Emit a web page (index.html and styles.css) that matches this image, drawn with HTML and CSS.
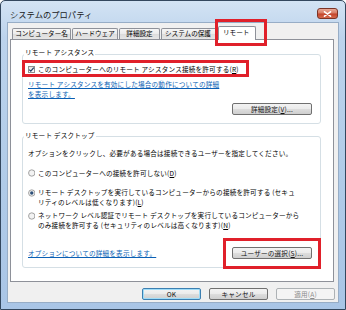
FILE: index.html
```html
<!DOCTYPE html>
<html lang="ja">
<head>
<meta charset="utf-8">
<title>システムのプロパティ</title>
<link rel="stylesheet" href="styles.css">
</head>
<body>
<div class="window">
  <div class="titlebar">
    <span class="title">システムのプロパティ</span>
    <span class="close"><svg width="9" height="6" viewBox="0 0 9 6"><path d="M1.5 0.8 L7.5 5.2 M7.5 0.8 L1.5 5.2" stroke="#fff" stroke-width="1.6" stroke-linecap="round"/></svg></span>
  </div>
  <div class="client">
    <div class="tabs">
      <div class="tab tab-name">コンピューター名</div>
      <div class="tab tab-hw">ハードウェア</div>
      <div class="tab tab-adv">詳細設定</div>
      <div class="tab tab-prot">システムの保護</div>
      <div class="tab tab-remote active marked-tab">リモート</div>
    </div>
    <div class="panel">
      <div class="group group-assist">
        <span class="group-title">リモート アシスタンス</span>
        <div class="option marked-check">
          <span class="checkbox"><svg width="7" height="7" viewBox="0 0 7 7"><path d="M1.3 3.6 L2.8 5.1 L5.8 1.6" fill="none" stroke="#1d3f66" stroke-width="1.2"/></svg></span>
          <span class="label">このコンピューターへのリモート アシスタンス接続を許可する(<u>R</u>)</span>
        </div>
        <a class="link link-assist" href="#">リモート アシスタンスを有効にした場合の動作についての詳細<br>を表示します。</a>
        <div class="button-row">
          <button class="btn btn-wide">詳細設定(<u>V</u>)...</button>
        </div>
      </div>
      <div class="group group-desktop">
        <span class="group-title">リモート デスクトップ</span>
        <p class="intro">オプションをクリックし、必要がある場合は接続できるユーザーを指定してください。</p>
        <div class="option radio-opt opt-none">
          <span class="radio"><svg width="8" height="8" viewBox="0 0 8 8"><circle cx="4" cy="4" r="3.4" fill="#f3f3f3" stroke="#939393" stroke-width="0.9"/></svg></span>
          <span class="label">このコンピューターへの接続を許可しない(<u>D</u>)</span>
        </div>
        <div class="option radio-opt opt-any">
          <span class="radio"><svg width="8" height="8" viewBox="0 0 8 8"><circle cx="4" cy="4" r="3.4" fill="#f3f3f3" stroke="#939393" stroke-width="0.9"/><circle cx="4" cy="4" r="1.8" fill="#2c4f78"/></svg></span>
          <span class="label">リモート デスクトップを実行しているコンピューターからの接続を許可する (セキュ<br>リティのレベルは低くなります)(<u>L</u>)</span>
        </div>
        <div class="option radio-opt opt-nla">
          <span class="radio"><svg width="8" height="8" viewBox="0 0 8 8"><circle cx="4" cy="4" r="3.4" fill="#f3f3f3" stroke="#939393" stroke-width="0.9"/></svg></span>
          <span class="label">ネットワーク レベル認証でリモート デスクトップを実行しているコンピューターから<br>のみ接続を許可する (セキュリティのレベルは高くなります)(<u>N</u>)</span>
        </div>
        <div class="bottom-row">
          <a class="link" href="#">オプションについての詳細を表示します。</a>
          <button class="btn btn-wide marked-btn">ユーザーの選択(<u>S</u>)...</button>
        </div>
      </div>
    </div>
    <div class="footer">
      <button class="btn btn-dlg btn-default">OK</button>
      <button class="btn btn-dlg">キャンセル</button>
      <button class="btn btn-dlg btn-disabled">適用(<u>A</u>)</button>
    </div>
  </div>
</div>
</body>
</html>
```
FILE: styles.css
```css
html, body {
  margin: 0;
  padding: 0;
  background: #ffffff;
}

body {
  font-family: "Noto Sans CJK JP", "Noto Sans", sans-serif;
  font-size: 6.6px;
  line-height: 8px;
  letter-spacing: 0.2px;
  color: #000000;
}

.window {
  width: 346px;
  height: 310px;
  box-sizing: border-box;
  border: 1px solid #33475e;
  border-radius: 5px 5px 0 0;
  background: linear-gradient(180deg, #d3e3f4 0%, #bcd3ec 12%, #b0cbe8 60%, #a9c5e6 100%);
  padding: 0 6px 6px;
  display: flex;
  flex-direction: column;
}

.titlebar {
  height: 21px;
  display: flex;
  justify-content: space-between;
  align-items: flex-start;
  flex-shrink: 0;
}

.title {
  margin: 8px 0 0 3px;
  font-size: 8.3px;
  line-height: 10px;
  letter-spacing: 0;
  color: #1a1a1a;
}

.close {
  margin: 7px 1px 0 0;
  width: 21px;
  height: 11px;
  box-sizing: border-box;
  border: 1px solid #7b3426;
  border-radius: 3px;
  background: linear-gradient(180deg, #e9a997 0%, #d77b63 45%, #c4442a 55%, #d5694c 100%);
  display: flex;
  align-items: center;
  justify-content: center;
}

.close svg {
  display: block;
}

.client {
  flex: 1;
  background: #f0f0f0;
  border: 1px solid #97adc6;
  display: flex;
  flex-direction: column;
}

.tabs {
  margin: 3px 0 0 4px;
  height: 13px;
  display: flex;
  align-items: flex-end;
  flex-shrink: 0;
}

.tab {
  height: 11px;
  box-sizing: border-box;
  border: 1px solid #8e9199;
  border-bottom: none;
  border-radius: 2px 2px 0 0;
  background: linear-gradient(180deg, #f6f6f6 0%, #ebebeb 50%, #dcdcdc 51%, #e6e6e6 100%);
  margin-right: 1px;
  text-align: center;
  line-height: 9px;
  letter-spacing: 0;
  white-space: nowrap;
  overflow: hidden;
}

.tab-name { width: 59px; }
.tab-hw { width: 46px; }
.tab-adv { width: 41px; }
.tab-prot { width: 59px; text-align: left; padding-left: 3px; }

.tab.active {
  height: 14px;
  width: 38px;
  margin: 0 0 -1px -3px;
  background: #ffffff;
  position: relative;
  z-index: 2;
  line-height: 11px;
  text-align: left;
  padding-left: 4px;
}

.marked-tab {
  overflow: visible;
}

.marked-tab::after {
  content: "";
  position: absolute;
  top: -8px;
  left: -4px;
  right: -12px;
  bottom: -6px;
  border: 3px solid #e0202a;
}

.panel {
  margin-left: 2px;
  width: 324px;
  height: 243px;
  box-sizing: border-box;
  border: 1px solid #8e9199;
  background: #ffffff;
  display: flex;
  flex-direction: column;
  flex-shrink: 0;
}

.group {
  position: relative;
  box-sizing: border-box;
  width: 299px;
  margin-left: 11px;
  border: 1px solid #d5dfe5;
  border-radius: 3px;
  padding: 0 8px 0 5px;
}

.group-assist {
  margin-top: 14px;
  height: 70px;
}

.group-desktop {
  margin-top: 12px;
  height: 132px;
}

.group-title {
  position: absolute;
  left: 1px;
  top: -7px;
  padding: 0 1px;
  background: #ffffff;
  white-space: nowrap;
}

.group-desktop .group-title {
  top: -6px;
}

.option {
  display: flex;
  align-items: flex-start;
  gap: 3px;
  white-space: nowrap;
}

.checkbox {
  width: 7px;
  height: 7px;
  box-sizing: border-box;
  border: 1px solid #8f8f8f;
  background: linear-gradient(180deg, #e4e4e4, #fbfbfb);
  margin-top: 1px;
  display: flex;
  align-items: center;
  justify-content: center;
}

.checkbox svg {
  display: block;
  margin: -1px;
}

.radio {
  width: 7px;
  height: 8px;
  display: flex;
  align-items: center;
}

.radio svg {
  display: block;
  margin-left: -0.5px;
}

.multi {
  line-height: 9.6px;
}

.marked-check {
  position: relative;
  width: fit-content;
  margin-top: 10px;
}

.marked-check::after {
  content: "";
  position: absolute;
  top: -5px;
  left: -6px;
  right: -10px;
  bottom: -4px;
  border: 3px solid #e0202a;
}

.link {
  display: block;
  color: #0a5fb4;
  text-decoration: underline;
  white-space: nowrap;
}

.link-assist {
  margin-top: 7px;
  line-height: 9.6px;
}

.button-row {
  margin-top: 4px;
  display: flex;
  justify-content: flex-end;
}

.btn {
  font-family: inherit;
  font-size: 6.6px;
  line-height: 10px;
  letter-spacing: 0.2px;
  color: #111111;
  height: 12px;
  padding: 0;
  box-sizing: border-box;
  border: 1px solid #707070;
  border-radius: 2px;
  background: linear-gradient(180deg, #f3f3f3 0%, #ebebeb 48%, #dddddd 52%, #cfcfcf 100%);
  white-space: nowrap;
}

.btn-wide {
  width: 80px;
}

.intro {
  margin: 12px 0 0;
  white-space: nowrap;
}

.opt-none { margin-top: 12px; }

.opt-any {
  margin-top: 11px;
  line-height: 9.6px;
}

.opt-nla {
  margin-top: 4px;
  line-height: 9.6px;
}

.opt-any .radio,
.opt-nla .radio {
  height: 9.6px;
}

.bottom-row {
  margin-top: 16.5px;
  height: 13px;
  display: flex;
  justify-content: space-between;
  align-items: center;
}

.marked-btn {
  position: relative;
  overflow: visible;
}

.marked-btn::after {
  content: "";
  position: absolute;
  top: -10px;
  left: -10px;
  right: -10px;
  bottom: -11px;
  border: 3px solid #e0202a;
}

.footer {
  margin-top: 6px;
  padding-right: 3px;
  display: flex;
  justify-content: flex-end;
  gap: 8px;
}

.btn-dlg {
  width: 59px;
}

.btn-default {
  border-color: #3c7fb1;
  box-shadow: inset 0 0 0 1px #9fdcf8;
}

.btn-disabled {
  border-color: #adb2b5;
  background: #f4f4f4;
  color: #8a8a8a;
}
```
